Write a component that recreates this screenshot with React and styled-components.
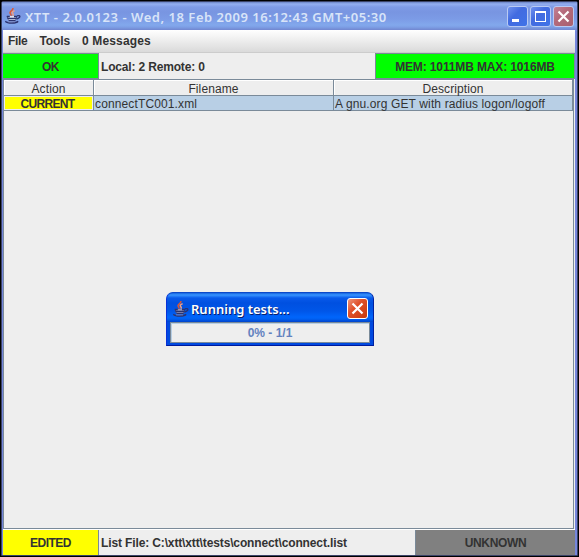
import React from "react";
import styled, { createGlobalStyle } from "styled-components";

const Global = createGlobalStyle`
  * { box-sizing: border-box; }
  body { margin: 0; background: #000; overflow: hidden; }
`;

const Screen = styled.div`
  width: 579px;
  height: 557px;
  padding: 1px;
  background: #000;
  font: 12px/14px "Liberation Sans", Arial, sans-serif;
  color: #333;
  white-space: pre;
`;

const Frame = styled.div`
  display: flex;
  flex-direction: column;
  width: 577px;
  height: 555px;
  padding: 0 2px 0 1px;
  border: 1px solid #3c4468;
  border-radius: 2px 2px 0 0;
  background: linear-gradient(#7594e0 0 29px, #7586dc 29px);
`;

const TitleBar = styled.header`
  display: flex;
  align-items: center;
  flex: none;
  height: 28px;
  margin: 0 -2px 0 -1px;
  padding: 0 3px;
  background: linear-gradient(#6a83c5 0, #94aff0 2px, #7f9be6 5px, #7895e1 10px, #7c9be6 17px, #82a8ec 23px, #7d9fe6 25px, #7186cf 28px);
`;

const Title = styled.h1`
  flex: 1;
  margin: 1px 0 0 ${(p) => (p.$active ? "2px" : "4px")};
  font: 600 13px/18px "Noto Sans", "Open Sans", sans-serif;
  letter-spacing: ${(p) => p.$spacing || "0"};
  color: ${(p) => (p.$active ? "#fff" : "#d8e4f8")};
  text-shadow: ${(p) => (p.$active ? "1px 1px #08206e" : "none")};
`;

const Controls = styled.div`
  display: flex;
  gap: 2px;
  margin-top: 1px;
`;

const ControlButton = styled.button`
  display: block;
  width: 21px;
  height: 21px;
  padding: 0;
  border: 1px solid ${(p) => (p.$active ? "#fff" : "#b9caf3")};
  border-radius: 3px;
  background: ${(p) =>
    p.$active
      ? "linear-gradient(135deg, #ed967c, #e0512a 40%, #c73a0d)"
      : p.$close
        ? "linear-gradient(135deg, #c38295, #b46a7b 40%, #a9606f)"
        : "linear-gradient(135deg, #6f91ee, #426be0 40%, #3f73e8)"};
  svg { display: block; }
`;

const Content = styled.main`
  display: flex;
  flex-direction: column;
  flex: 1;
  background: #eee;
`;

const MenuBar = styled.nav`
  display: flex;
  gap: 12px;
  height: 23px;
  padding: 4px 5px 0;
  border-bottom: 1px solid #ccc;
  background: linear-gradient(#fff, #dadada);
  font-weight: bold;
`;

const StatusRow = styled.div`
  display: grid;
  grid-template-columns: ${(p) => p.$columns};
  grid-template-rows: 100%;
  height: 26px;
  line-height: ${(p) => (p.$bottom ? "27px" : "26px")};
  border-top: ${(p) => (p.$bottom ? "1px solid #fff" : "0")};
  font-weight: bold;
`;

const StatusCell = styled.div`
  text-align: ${(p) => (p.$color ? "center" : "left")};
  padding-left: ${(p) => (p.$color ? "0" : "2px")};
  background: ${(p) => p.$color || "#eee"};
  border: solid #7a8a99;
  border-width: ${(p) => p.$edges || "0"};
`;

const Message = styled(StatusCell)`
  line-height: 28px;
`;

const Text = styled.span`
  letter-spacing: ${(p) => p.$spacing || "0"};
`;

const TablePane = styled.section`
  flex: 1;
  margin-right: 1px;
  border: 1px solid #7a8a99;
`;

const TableRow = styled.div`
  display: grid;
  grid-template-columns: 90px 240px 1fr;
  grid-template-rows: 100%;
  height: ${(p) => (p.$header ? "16px" : "15px")};
`;

const HeaderCell = styled.div`
  text-align: center;
  line-height: 18px;
  letter-spacing: 0.1px;
  border: solid #7a8a99;
  border-width: 0 1px 1px 0;
  box-shadow: inset 1px 1px #fff;
`;

const Cell = styled.div`
  line-height: 16px;
  letter-spacing: 0.13px;
  background: #b8cfe5;
  border: solid #7a8a99;
  border-width: 0 1px 1px 0;
  padding-left: 1px;
`;

const CurrentCell = styled(Cell)`
  padding: 0 2px 0 0;
  background: #ff0;
  box-shadow: inset 0 0 0 1px #eee;
  text-align: center;
  font-weight: bold;
  letter-spacing: -0.65px;
`;

const Dialog = styled.aside`
  position: absolute;
  left: 166px;
  top: 292px;
  width: 208px;
  height: 54px;
  padding: 0 3px 3px;
  border: 1px solid #0831c8;
  border-color: #0b49c9 #0021a0 #001a9c #0831d9;
  border-radius: 7px 7px 0 0;
  background: #0049df;
`;

const DialogBar = styled.header`
  display: flex;
  align-items: center;
  height: 29px;
  margin: 0 -3px;
  padding: 2px 5px 0 6px;
  border-radius: 6px 6px 0 0;
  background: linear-gradient(#1662dc 0, #3794ff 2px, #0859ea 5px, #0050e0 10px, #0056e8 18px, #0065fb 24px, #0060f2 26px, #0043cb 29px);
`;

const Progress = styled.div`
  height: 21px;
  border: 1px solid #7a8a99;
  box-shadow: inset 1px 1px #b8cfe5;
  background: #eee;
  line-height: 20px;
  text-align: center;
  font-weight: bold;
  color: #6382bf;
`;

const CupSvg = styled.svg`
  flex: none;
`;

function JavaIcon({ muted }) {
  const cream = muted ? "#8f96bd" : "#dfe4f4";
  return (
    <CupSvg width="16" height="16" viewBox="0 0 16 16" fill="none">
      <path d="M7.8 0C8.8 2.1 4.9 2.8 5 4.8c.1 1.2 1.3 1.6 1.2 3" stroke="#e3572b" strokeWidth="1.5" />
      <path d="M9.6 2.6C7.1 3.7 6.7 4.6 7.8 5.6c.7.7.5 1.5 0 2.2" stroke="#f0a184" strokeWidth="1.5" />
      <path d="M2 8h10l-.8 3.2L9.5 13h-5L2.8 11.2z" fill={cream} />
      <path d="M1.8 8.5h3M9 8.5h3M2.5 10.4h9M3.8 12.5h6.6" stroke="#2c3470" strokeWidth="1.3" />
      <path d="M2.2 8l.8 3.2L4.5 13M11.8 8l-.8 3.2L9.5 13" stroke="#2c3470" strokeWidth=".8" />
      <path d="M12 7.8c3.7-1.2 4.2 2-.5 3.2" stroke="#2c3470" strokeWidth="1.3" />
      <path d="M.3 13.2c1.7 2.4 11 2.4 12.8.1" stroke="#2c3470" strokeWidth="1.5" />
      <path d="M3 13.9h7" stroke="#8a91c2" strokeWidth=".8" />
    </CupSvg>
  );
}

function ControlIcon({ type }) {
  return (
    <svg width="19" height="19" viewBox="0 0 19 19" fill="none" stroke="#fff">
      {type === "minimize" && <path d="M4 13.5h7" strokeWidth="3" />}
      {type === "maximize" && <path d="M4 5.5h11M4.5 5v10M14.5 5v10M4 14.5h11M4 4.5h11" />}
      {type === "close" && <path d="m4.5 4.5 10 10m0-10-10 10" strokeWidth="2.2" />}
    </svg>
  );
}

export default function App() {
  return (
    <>
      <Global />
      <Screen>
        <Frame>
          <TitleBar>
            <JavaIcon />
            <Title $spacing="0.53px">XTT - 2.0.0123 - Wed, 18 Feb 2009 16:12:43 GMT+05:30</Title>
            <Controls>
              <ControlButton aria-label="Minimize"><ControlIcon type="minimize" /></ControlButton>
              <ControlButton aria-label="Maximize"><ControlIcon type="maximize" /></ControlButton>
              <ControlButton $close aria-label="Close"><ControlIcon type="close" /></ControlButton>
            </Controls>
          </TitleBar>
          <Content>
            <MenuBar>
              <Text $spacing="-0.3px">File</Text>
              <Text $spacing="-0.1px">Tools</Text>
              <Text $spacing="0.13px">0 Messages</Text>
            </MenuBar>
            <StatusRow $columns="96px 1fr 200px">
              <StatusCell $color="#0f0" $edges="1px 1px 1px 0"><Text $spacing="-0.4px">OK</Text></StatusCell>
              <Message><Text $spacing="-0.17px">Local: 2 Remote: 0</Text></Message>
              <StatusCell $color="#0f0" $edges="1px 1px 1px 1px"><Text $spacing="-0.13px">MEM: 1011MB MAX: 1016MB</Text></StatusCell>
            </StatusRow>
            <TablePane>
              <TableRow $header>
                <HeaderCell>Action</HeaderCell>
                <HeaderCell>Filename</HeaderCell>
                <HeaderCell>Description</HeaderCell>
              </TableRow>
              <TableRow>
                <CurrentCell>CURRENT</CurrentCell>
                <Cell>connectTC001.xml</Cell>
                <Cell>A gnu.org GET with radius logon/logoff</Cell>
              </TableRow>
            </TablePane>
            <StatusRow $bottom $columns="96px 1fr 160px">
              <StatusCell $color="#ff0" $edges="0 1px 0 0"><Text $spacing="-0.5px">EDITED</Text></StatusCell>
              <StatusCell><Text $spacing="-0.13px">List File: C:\xtt\xtt\tests\connect\connect.list</Text></StatusCell>
              <StatusCell $color="#808080" $edges="0 0 0 1px"><Text $spacing="-0.35px">UNKNOWN</Text></StatusCell>
            </StatusRow>
          </Content>
        </Frame>
        <Dialog>
          <DialogBar>
            <JavaIcon muted />
            <Title $active>Running tests...</Title>
            <ControlButton $active aria-label="Close"><ControlIcon type="close" /></ControlButton>
          </DialogBar>
          <Progress>0% - 1/1</Progress>
        </Dialog>
      </Screen>
    </>
  );
}
